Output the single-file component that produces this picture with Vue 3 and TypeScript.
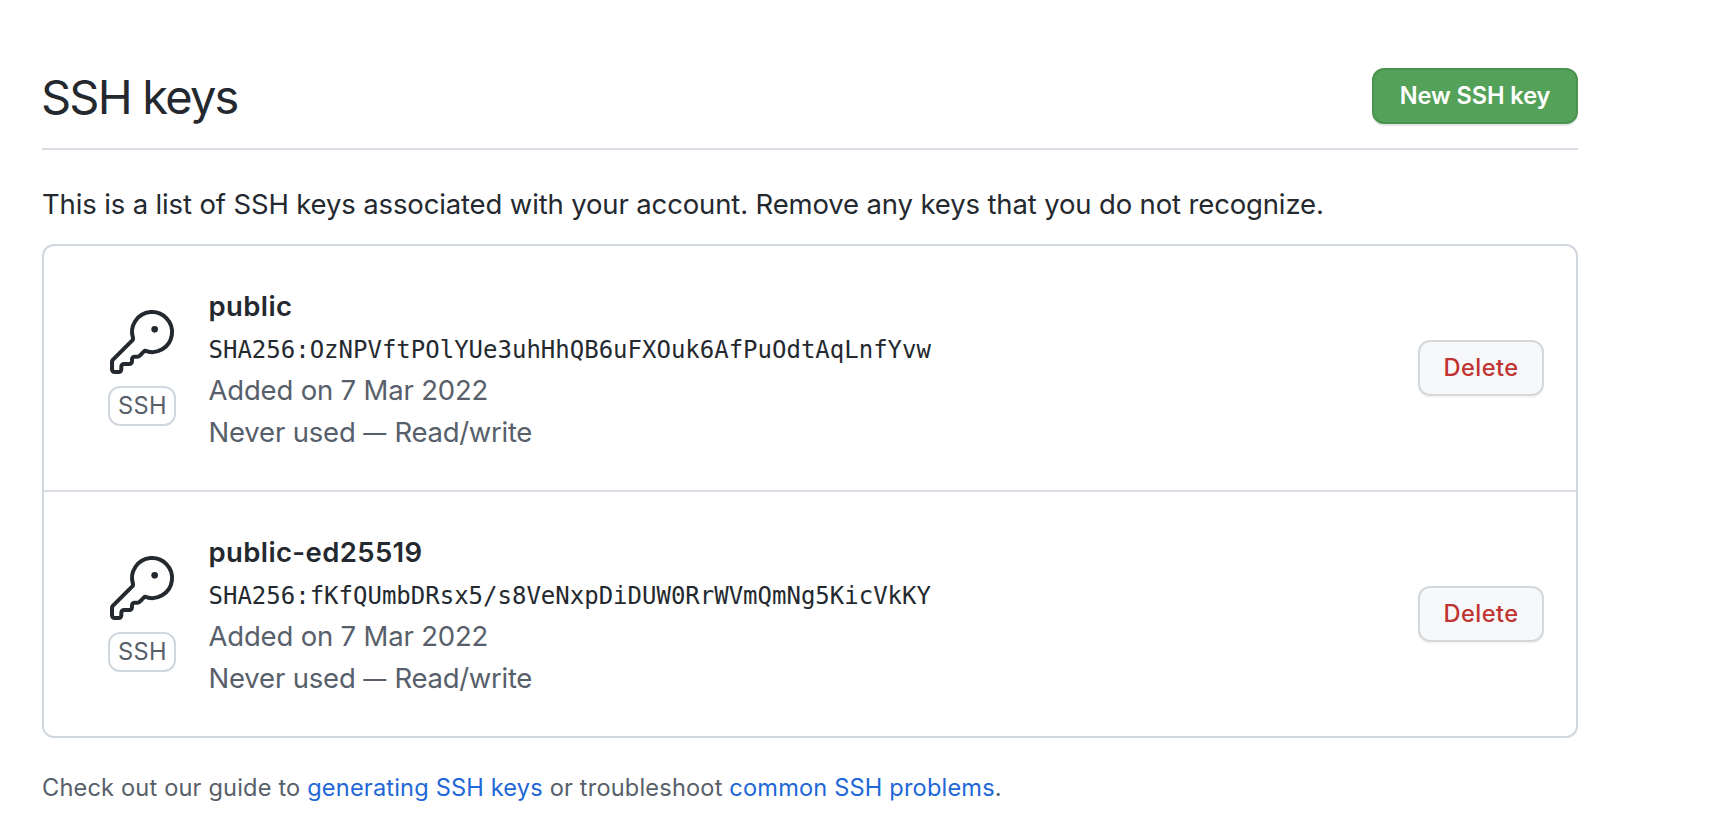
<script setup lang="ts">
interface SshKey {
  title: string
  fingerprint: string
  added: string
}

const keys: SshKey[] = [
  { title: 'public', fingerprint: 'SHA256:OzNPVftPOlYUe3uhHhQB6uFXOuk6AfPuOdtAqLnfYvw', added: 'Added on 7 Mar 2022' },
  { title: 'public-ed25519', fingerprint: 'SHA256:fKfQUmbDRsx5/s8VeNxpDiDUW0RrWVmQmNg5KicVkKY', added: 'Added on 7 Mar 2022' },
]
</script>

<template>
  <main class="page">
    <header class="subhead">
      <h2 class="title">SSH keys</h2>
      <button class="btn primary" type="button">New SSH key</button>
    </header>

    <p class="intro">This is a list of SSH keys associated with your account. Remove any keys that you do not recognize.</p>

    <ul class="box">
      <li v-for="key in keys" :key="key.title" class="row">
        <div class="kind">
          <svg class="icon" viewBox="0 0 24 24" width="64" height="64" aria-hidden="true">
            <circle class="hole" cx="16.75" cy="7.25" r="1.25" />
            <path
              class="outline"
              d="M13.05 15.25A7.5 7.5 0 1 0 8.65 10.6L8.55 11.2L1.04 18.7Q.75 19 .75 19.4V22.25a1 1 0 0 0 1 1h1.5a1 1 0 0 0 1-1v-1a1 1 0 0 1 1-1H7.25a1 1 0 0 0 1-1v-.75a1 1 0 0 1 1-1h1.1c.28 0 .54-.1.74-.3L13.05 15.25z"
            />
          </svg>
          <span class="label">SSH</span>
        </div>
        <div class="details">
          <strong class="name">{{ key.title }}</strong>
          <code class="fingerprint">{{ key.fingerprint }}</code>
          <span class="meta">{{ key.added }}</span>
          <span class="meta">Never used <span class="dash">—</span> <span class="access">Read/write</span></span>
        </div>
        <button class="btn danger" type="button">Delete</button>
      </li>
    </ul>

    <p class="footnote">
      Check out our guide to <a>generating SSH keys</a> or troubleshoot <a>common SSH problems</a>.
    </p>
  </main>
</template>

<style>
body {
  background: #fff;
}
</style>

<style scoped>
.page {
  box-sizing: border-box;
  width: 1620px;
  height: 822px;
  padding: 68px 42px 0;
  overflow: hidden;
  color: #24292f;
  font-family: Inter, 'Liberation Sans', sans-serif;
  font-size: 27.5px;
  line-height: 42px;
}
.subhead {
  display: flex;
  justify-content: space-between;
  align-items: flex-start;
  box-sizing: border-box;
  height: 82px;
  border-bottom: 2px solid #d8dee4;
}
.title {
  margin: 0 0 0 -1px;
  font-size: 47px;
  font-weight: 400;
  line-height: 58px;
  letter-spacing: -1.8px;
}
.btn {
  box-sizing: border-box;
  height: 56px;
  padding: 0;
  border: 2px solid transparent;
  border-radius: 12px;
  font-family: inherit;
  font-size: 23.6px;
  line-height: 50px;
  white-space: nowrap;
}
.primary {
  width: 206px;
  color: #fff;
  background: #54a159;
  border-color: #4b914f;
  font-weight: 600;
  letter-spacing: -0.1px;
  box-shadow: 0 2px 0 rgba(27, 31, 36, 0.1);
}
.danger {
  width: 126px;
  margin-left: auto;
  color: #bf3430;
  background: #f6f8fa;
  border-color: #d5d8da;
  font-weight: 500;
  letter-spacing: 0.42px;
  box-shadow: 0 2px 0 rgba(27, 31, 36, 0.04);
}
.intro {
  margin: 33px 0 19px;
  letter-spacing: -0.143px;
  white-space: nowrap;
}
.box {
  margin: 0;
  padding: 0;
  border: 2px solid #d0d7de;
  border-radius: 12px;
  list-style: none;
}
.row {
  display: flex;
  align-items: center;
  height: 244px;
  padding: 0 32px 0 64px;
}
.row + .row {
  border-top: 2px solid #d8dee4;
}
.kind {
  display: flex;
  flex-direction: column;
  align-items: center;
  gap: 12px;
  width: 68px;
  margin-right: 32.5px;
}
.icon {
  display: block;
  overflow: visible;
}
.hole {
  fill: #24292f;
}
.outline {
  fill: none;
  stroke: #24292f;
  stroke-width: 1.5;
  stroke-linejoin: round;
}
.label {
  box-sizing: border-box;
  width: 68px;
  height: 40px;
  padding-left: 1px;
  border: 2px solid #d0d7de;
  border-radius: 12px;
  color: #57606a;
  font-size: 23.6px;
  line-height: 36px;
  letter-spacing: 0.4px;
  text-align: center;
}
.details {
  display: flex;
  flex-direction: column;
  padding-top: 2px;
}
.name {
  font-weight: 600;
  letter-spacing: 0.38px;
}
.fingerprint {
  height: 40px;
  padding-top: 2px;
  font-family: 'DejaVu Sans Mono', monospace;
  font-size: 24px;
}
.meta {
  color: #57606a;
  letter-spacing: -0.18px;
}
.dash {
  margin-right: 1px;
  font-size: 23px;
  line-height: 1;
  vertical-align: 1px;
}
.access {
  letter-spacing: -0.3px;
}
.footnote {
  margin: 30px 0 0;
  color: #57606a;
  font-size: 23.6px;
  line-height: 40px;
  letter-spacing: 0.17px;
}
.footnote a {
  color: #2167d8;
}
</style>
